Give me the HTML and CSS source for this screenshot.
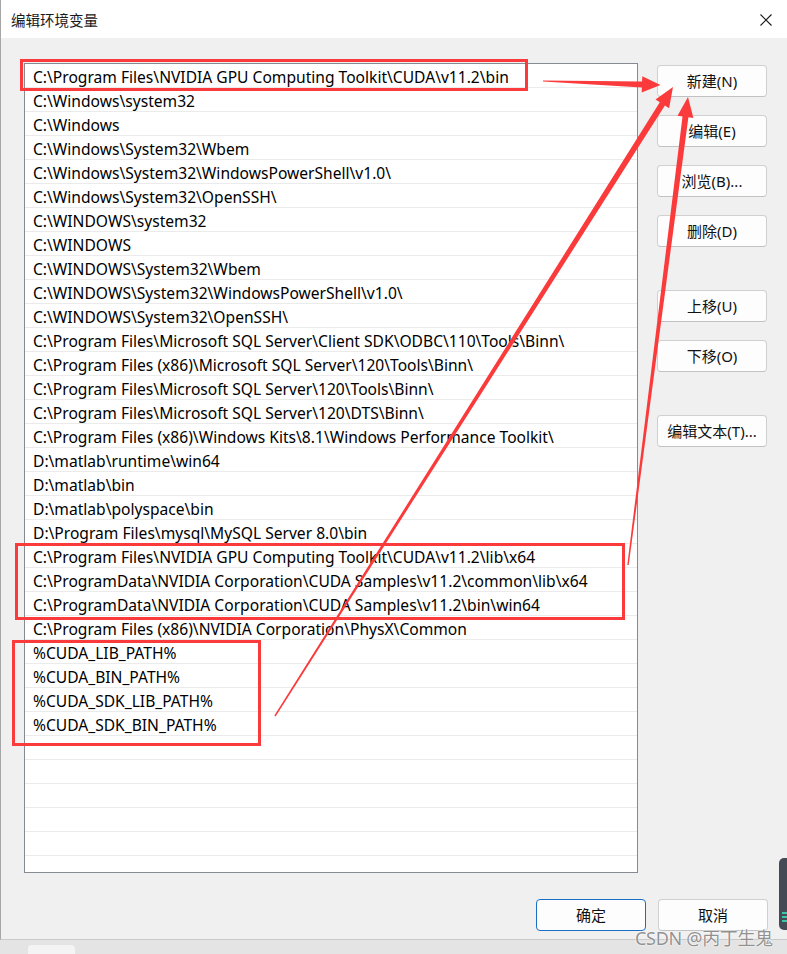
FILE: index.html
```html
<!DOCTYPE html>
<html lang="zh-CN">
<head>
<meta charset="utf-8">
<title>编辑环境变量</title>
<link rel="stylesheet" href="styles.css">
</head>
<body>
<div class="window">
  <div class="titlebar">
    <span class="title">编辑环境变量</span>
    <svg class="close" width="12" height="12" viewBox="0 0 12 12"><path d="M0.5 0.5 L11.5 11.5 M11.5 0.5 L0.5 11.5" stroke="#1b1b1b" stroke-width="1.1" fill="none"/></svg>
  </div>
  <div class="body">
    <div class="main">
      <div class="list">
        <div class="row">C:\Program Files\NVIDIA GPU Computing Toolkit\CUDA\v11.2\bin</div>
        <div class="row">C:\Windows\system32</div>
        <div class="row">C:\Windows</div>
        <div class="row">C:\Windows\System32\Wbem</div>
        <div class="row">C:\Windows\System32\WindowsPowerShell\v1.0\</div>
        <div class="row">C:\Windows\System32\OpenSSH\</div>
        <div class="row">C:\WINDOWS\system32</div>
        <div class="row">C:\WINDOWS</div>
        <div class="row">C:\WINDOWS\System32\Wbem</div>
        <div class="row">C:\WINDOWS\System32\WindowsPowerShell\v1.0\</div>
        <div class="row">C:\WINDOWS\System32\OpenSSH\</div>
        <div class="row">C:\Program Files\Microsoft SQL Server\Client SDK\ODBC\110\Tools\Binn\</div>
        <div class="row">C:\Program Files (x86)\Microsoft SQL Server\120\Tools\Binn\</div>
        <div class="row">C:\Program Files\Microsoft SQL Server\120\Tools\Binn\</div>
        <div class="row">C:\Program Files\Microsoft SQL Server\120\DTS\Binn\</div>
        <div class="row">C:\Program Files (x86)\Windows Kits\8.1\Windows Performance Toolkit\</div>
        <div class="row">D:\matlab\runtime\win64</div>
        <div class="row">D:\matlab\bin</div>
        <div class="row">D:\matlab\polyspace\bin</div>
        <div class="row">D:\Program Files\mysql\MySQL Server 8.0\bin</div>
        <div class="row">C:\Program Files\NVIDIA GPU Computing Toolkit\CUDA\v11.2\lib\x64</div>
        <div class="row">C:\ProgramData\NVIDIA Corporation\CUDA Samples\v11.2\common\lib\x64</div>
        <div class="row">C:\ProgramData\NVIDIA Corporation\CUDA Samples\v11.2\bin\win64</div>
        <div class="row">C:\Program Files (x86)\NVIDIA Corporation\PhysX\Common</div>
        <div class="row">%CUDA_LIB_PATH%</div>
        <div class="row">%CUDA_BIN_PATH%</div>
        <div class="row">%CUDA_SDK_LIB_PATH%</div>
        <div class="row">%CUDA_SDK_BIN_PATH%</div>
        <div class="row"></div>
        <div class="row"></div>
        <div class="row"></div>
        <div class="row"></div>
        <div class="row"></div>
        <div class="row"></div>
      </div>
      <div class="side">
        <button class="btn">新建(N)</button>
        <button class="btn">编辑(E)</button>
        <button class="btn">浏览(B)...</button>
        <button class="btn">删除(D)</button>
        <button class="btn sep">上移(U)</button>
        <button class="btn">下移(O)</button>
        <button class="btn sep">编辑文本(T)...</button>
      </div>
    </div>
    <div class="footer">
      <button class="btn primary">确定</button>
      <button class="btn">取消</button>
    </div>
  </div>
</div>
<div class="taskbar">
  <div class="task-item"></div>
</div>

<div class="gadget">
  <span></span><span></span><span></span>
</div>

<svg class="annot" width="787" height="954" viewBox="0 0 787 954">
  <g fill="none" stroke="#fb3b3b" stroke-width="3">
    <rect x="21.5" y="60.5" width="505" height="29"/>
    <rect x="16.5" y="544.5" width="607" height="74"/>
    <rect x="13.5" y="641.5" width="246" height="103"/>
  </g>
  <g fill="#fb3b3b">
    <polygon points="543,80.4 642,81.4 642.3,76.2 660.5,85 641.7,92.6 641.9,87.4 543,81.6"/>
    <polygon points="274.4,715.6 659.8,102.3 655.5,99.6 673,87 669.1,108.2 664.9,105.5 275.6,716.4"/>
    <polygon points="627.3,564.9 682.5,116.5 677.5,115.8 688,97 693.4,117.9 688.4,117.2 628.7,565.1"/>
  </g>
</svg>

<div class="watermark">CSDN @丙丁生鬼</div>
</body>
</html>
```

FILE: styles.css
```css
* { box-sizing: border-box; }

html, body {
  margin: 0;
  padding: 0;
}

body {
  width: 787px;
  height: 954px;
  overflow: hidden;
  background: #e4e4e4;
  position: relative;
  font-family: "Noto Sans", "Noto Sans CJK SC", sans-serif;
  color: #000;
}

.window {
  width: 787px;
  height: 940px;
  background: #f0f0f0;
  border-left: 1px solid #a6a6a6;
  border-bottom: 1px solid #c9c9c9;
  display: flex;
  flex-direction: column;
}

.titlebar {
  height: 38px;
  background: #fff;
  display: flex;
  align-items: center;
  justify-content: space-between;
  padding: 0 15px 0 10px;
  flex: none;
}

.title {
  font-family: "Noto Sans CJK SC", sans-serif;
  font-size: 14.5px;
  color: #1a1a1a;
  padding-top: 1px;
}

.close {
  display: block;
  margin-top: 2px;
}

.body {
  flex: 1;
  padding: 25px 0 0 23px;
  display: flex;
  flex-direction: column;
}

.main {
  display: flex;
  align-items: flex-start;
}

.list {
  width: 614px;
  height: 810px;
  background: #fff;
  border: 1px solid #868a91;
  overflow: hidden;
  flex: none;
}

.row {
  height: 24px;
  border-bottom: 1px solid #ebebeb;
  padding: 3px 0 0 8px;
  font-size: 15.6px;
  line-height: 20px;
  white-space: nowrap;
  color: #000;
}

.side {
  margin-left: 19px;
  padding-top: 2px;
  display: flex;
  flex-direction: column;
  gap: 18px;
}

.btn {
  width: 110px;
  height: 32px;
  background: #fdfdfd;
  border: 1px solid #d0d0d0;
  border-bottom-color: #c2c2c2;
  border-radius: 4px;
  font-family: "Noto Sans", "Noto Sans CJK SC", sans-serif;
  font-size: 15px;
  color: #111;
  padding: 0;
  margin: 0;
  line-height: 30px;
  text-align: center;
}

.side .sep {
  margin-top: 25px;
}

.footer {
  display: flex;
  justify-content: flex-end;
  gap: 12px;
  padding-right: 19px;
  margin-top: 26px;
}

.btn.primary {
  border: 1px solid #1a6fc4;
}

.taskbar {
  height: 14px;
  position: relative;
}

.task-item {
  position: absolute;
  left: 28px;
  top: 5px;
  width: 47px;
  height: 20px;
  background: #f4f4f4;
  border-radius: 4px;
}

.gadget {
  position: absolute;
  left: 779px;
  top: 858px;
  width: 10px;
  height: 72px;
  background: #454b55;
  border-radius: 5px 0 0 5px;
  display: flex;
  flex-direction: column;
  justify-content: flex-end;
  gap: 2px;
  padding: 0 0 8px 3px;
}

.gadget span {
  display: block;
  height: 2px;
  width: 6px;
  background: #3fc6a8;
}

.annot {
  position: absolute;
  left: 0;
  top: 0;
  pointer-events: none;
}

.watermark {
  position: absolute;
  left: 635px;
  top: 924px;
  font-family: "Noto Sans", "Noto Sans CJK SC", sans-serif;
  font-size: 18px;
  color: rgba(125, 125, 125, 0.85);
  text-shadow: 0 0 2px #fff, 0 0 1px #fff;
  white-space: nowrap;
  letter-spacing: -0.3px;
}
```
